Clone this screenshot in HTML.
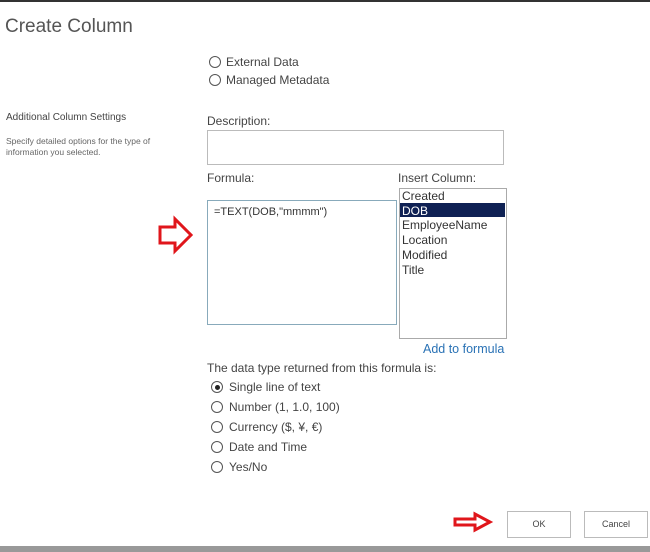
<!DOCTYPE html>
<html><head><style>
body{margin:0;width:650px;height:552px;background:#fff;position:relative;overflow:hidden;font-family:"Liberation Sans",sans-serif;color:#333}
.a{position:absolute;white-space:nowrap}
.r{position:absolute;width:10px;height:10px;border:1px solid #555;border-radius:50%}
.t{font-size:12px;color:#444}
</style></head><body>
<div class="a" style="left:0;top:0;width:650px;height:2px;background:#333"></div>
<div class="a" style="left:5px;top:16px;font-size:19px;color:#555">Create Column</div>
<div class="r" style="left:209px;top:56px"></div><div class="a t" style="left:226px;top:55px">External Data</div>
<div class="r" style="left:209px;top:74px"></div><div class="a t" style="left:226px;top:73px">Managed Metadata</div>
<div class="a" style="left:6px;top:112px;font-size:10px;color:#444">Additional Column Settings</div>
<div class="a" style="left:6px;top:136px;font-size:8.5px;color:#666;line-height:11px">Specify detailed options for the type of<br>information you selected.</div>
<div class="a t" style="left:207px;top:114px">Description:</div>
<div class="a" style="left:207px;top:130px;width:295px;height:33px;border:1px solid #bbb"></div>
<div class="a t" style="left:207px;top:171px">Formula:</div>
<div class="a t" style="left:398px;top:171px">Insert Column:</div>
<div class="a" style="left:207px;top:200px;width:188px;height:123px;border:1px solid #8ab"></div>
<div class="a" style="left:214px;top:206px;font-size:11px;color:#333">=TEXT(DOB,"mmmm")</div>
<div class="a" style="left:399px;top:188px;width:106px;height:149px;border:1px solid #aaa"></div>
<div class="a" style="left:400px;top:203px;width:105px;height:14px;background:#0f2154"></div>
<div class="a" style="left:402px;top:189px;font-size:12px;line-height:14.7px;color:#333">Created<br><span style="color:#fff">DOB</span><br>EmployeeName<br>Location<br>Modified<br>Title</div>
<div class="a" style="left:423px;top:342px;font-size:12.5px;color:#2a72b5">Add to formula</div>
<div class="a t" style="left:207px;top:361px">The data type returned from this formula is:</div>
<div class="r" style="left:211px;top:381px"><div style="position:absolute;left:2.5px;top:2.5px;width:5px;height:5px;border-radius:50%;background:#222"></div></div>
<div class="a t" style="left:229px;top:380px">Single line of text</div>
<div class="r" style="left:211px;top:401px"></div><div class="a t" style="left:229px;top:400px">Number (1, 1.0, 100)</div>
<div class="r" style="left:211px;top:421px"></div><div class="a t" style="left:229px;top:420px">Currency ($, ¥, €)</div>
<div class="r" style="left:211px;top:441px"></div><div class="a t" style="left:229px;top:440px">Date and Time</div>
<div class="r" style="left:211px;top:461px"></div><div class="a t" style="left:229px;top:460px">Yes/No</div>
<div class="a" style="left:507px;top:511px;width:62px;height:25px;border:1px solid #bbb;font-size:9px;text-align:center;line-height:25px;color:#444">OK</div>
<div class="a" style="left:584px;top:511px;width:62px;height:25px;border:1px solid #bbb;font-size:9px;text-align:center;line-height:25px;color:#444">Cancel</div>
<div class="a" style="left:0;top:546px;width:650px;height:6px;background:#999"></div>
<svg class="a" style="left:0;top:0" width="650" height="552">
<path d="M160 227 H175 V219 L191 235 L175 251 V243 H160 Z" fill="none" stroke="#e0161b" stroke-width="3" stroke-linejoin="miter"/>
<path d="M455 519 H475 V514 L490 522 L475 530 V525 H455 Z" fill="none" stroke="#e0161b" stroke-width="3"/>
</svg>
</body></html>
